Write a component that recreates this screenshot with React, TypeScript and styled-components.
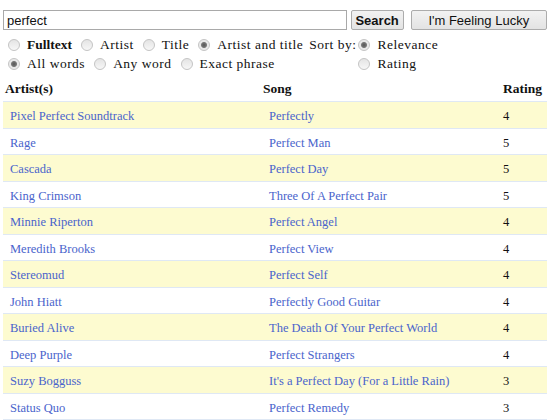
import * as React from 'react';
import styled, { createGlobalStyle } from 'styled-components';

const GlobalStyle = createGlobalStyle`
  html, body {
    margin: 0;
    padding: 0;
    background: #ffffff;
  }
  body {
    font-family: "Liberation Serif", "Times New Roman", serif;
    color: #111;
  }
`;

const Page = styled.div`
  padding: 10px 3px 0 3px;
  width: 544px;
`;

const SearchRow = styled.form`
  display: flex;
  align-items: center;
  height: 20px;
`;

const SearchInput = styled.input`
  box-sizing: border-box;
  width: 345px;
  height: 20px;
  margin: 0;
  padding: 0 3px;
  border: 1px solid #a9a9a9;
  font-family: "Liberation Sans", Arial, sans-serif;
  font-size: 13px;
  color: #111;
  outline: none;
`;

const Button = styled.button<{ $bold?: boolean; $width: number; $gap: number }>`
  box-sizing: border-box;
  width: ${({ $width }) => $width}px;
  height: 20px;
  margin: 0 0 0 ${({ $gap }) => $gap}px;
  padding: 0;
  border: 1px solid #acacac;
  border-radius: 2px;
  background: linear-gradient(#f2f2f2, #e3e3e3);
  font-family: "Liberation Sans", Arial, sans-serif;
  font-size: 13px;
  font-weight: ${({ $bold }) => ($bold ? 700 : 400)};
  color: #111;
`;

const Options = styled.div`
  display: flex;
  margin-top: 5px;
  padding-left: 5px;
  font-size: 13.5px;
  letter-spacing: 0.5px;
`;

const OptionLines = styled.div`
  display: flex;
  flex-direction: column;
`;

const OptionLine = styled.div`
  display: flex;
  align-items: center;
  height: 19px;
  gap: 9px;
`;

const Choice = styled.label<{ $bold?: boolean }>`
  display: flex;
  align-items: center;
  gap: 7px;
  font-weight: ${({ $bold }) => ($bold ? 700 : 400)};
  letter-spacing: ${({ $bold }) => ($bold ? '0' : '0.5px')};
  white-space: nowrap;
`;

const Radio = styled.span<{ $on?: boolean }>`
  box-sizing: border-box;
  width: 12px;
  height: 12px;
  border-radius: 50%;
  border: 1px solid #c4c4c4;
  background: ${({ $on }) =>
    $on
      ? 'radial-gradient(circle, #555 0, #777 2.5px, #e6e6e6 3.5px, #f4f4f4 100%)'
      : 'linear-gradient(#e4e4e4, #f7f7f7)'};
`;

const SortBlock = styled.div`
  display: flex;
  margin-left: 6px;
  gap: 2px;
`;

const SortLabel = styled.div`
  height: 19px;
  line-height: 19px;
  white-space: nowrap;
`;

const Table = styled.div`
  margin-top: 6px;
  display: grid;
  grid-template-columns: 259px 234px 1fr;
`;

const HeadCell = styled.div<{ $pad: number }>`
  height: 22px;
  line-height: 20px;
  padding-left: ${({ $pad }) => $pad}px;
  font-weight: 700;
  font-size: 13.5px;
  border-bottom: 1px solid #dfe8f4;
`;

const Cell = styled.div<{ $alt: boolean }>`
  box-sizing: border-box;
  height: 26.5px;
  line-height: 24px;
  padding: 2px 0 0 7px;
  font-size: 12.5px;
  background: ${({ $alt }) => ($alt ? '#fdfbd0' : '#ffffff')};
  border-bottom: 1px solid #dfe8f4;
  white-space: nowrap;
`;

const Link = styled.a`
  color: #4a64cc;
  text-decoration: none;
`;

const rows: [string, string, number][] = [
  ['Pixel Perfect Soundtrack', 'Perfectly', 4],
  ['Rage', 'Perfect Man', 5],
  ['Cascada', 'Perfect Day', 5],
  ['King Crimson', 'Three Of A Perfect Pair', 5],
  ['Minnie Riperton', 'Perfect Angel', 4],
  ['Meredith Brooks', 'Perfect View', 4],
  ['Stereomud', 'Perfect Self', 4],
  ['John Hiatt', 'Perfectly Good Guitar', 4],
  ['Buried Alive', 'The Death Of Your Perfect World', 4],
  ['Deep Purple', 'Perfect Strangers', 4],
  ['Suzy Bogguss', "It's a Perfect Day (For a Little Rain)", 3],
  ['Status Quo', 'Perfect Remedy', 3],
];

export default function App() {
  return (
    <>
      <GlobalStyle />
      <Page>
        <SearchRow onSubmit={(e) => e.preventDefault()}>
          <SearchInput defaultValue="perfect" />
          <Button $bold $width={53} $gap={4}>
            Search
          </Button>
          <Button $width={137} $gap={7}>
            I'm Feeling Lucky
          </Button>
        </SearchRow>
        <Options>
          <OptionLines>
            <OptionLine>
              <Choice $bold>
                <Radio />
                Fulltext
              </Choice>
              <Choice>
                <Radio />
                Artist
              </Choice>
              <Choice>
                <Radio />
                Title
              </Choice>
              <Choice>
                <Radio $on />
                Artist and title
              </Choice>
            </OptionLine>
            <OptionLine>
              <Choice>
                <Radio $on />
                All words
              </Choice>
              <Choice>
                <Radio />
                Any word
              </Choice>
              <Choice>
                <Radio />
                Exact phrase
              </Choice>
            </OptionLine>
          </OptionLines>
          <SortBlock>
            <SortLabel>Sort by:</SortLabel>
            <OptionLines>
              <OptionLine>
                <Choice>
                  <Radio $on />
                  Relevance
                </Choice>
              </OptionLine>
              <OptionLine>
                <Choice>
                  <Radio />
                  Rating
                </Choice>
              </OptionLine>
            </OptionLines>
          </SortBlock>
        </Options>
        <Table>
          <HeadCell $pad={2}>Artist(s)</HeadCell>
          <HeadCell $pad={1}>Song</HeadCell>
          <HeadCell $pad={7}>Rating</HeadCell>
          {rows.map(([artist, song, rating], i) => (
            <React.Fragment key={artist}>
              <Cell $alt={i % 2 === 0}>
                <Link href="#">{artist}</Link>
              </Cell>
              <Cell $alt={i % 2 === 0}>
                <Link href="#">{song}</Link>
              </Cell>
              <Cell $alt={i % 2 === 0}>{rating}</Cell>
            </React.Fragment>
          ))}
        </Table>
      </Page>
    </>
  );
}
